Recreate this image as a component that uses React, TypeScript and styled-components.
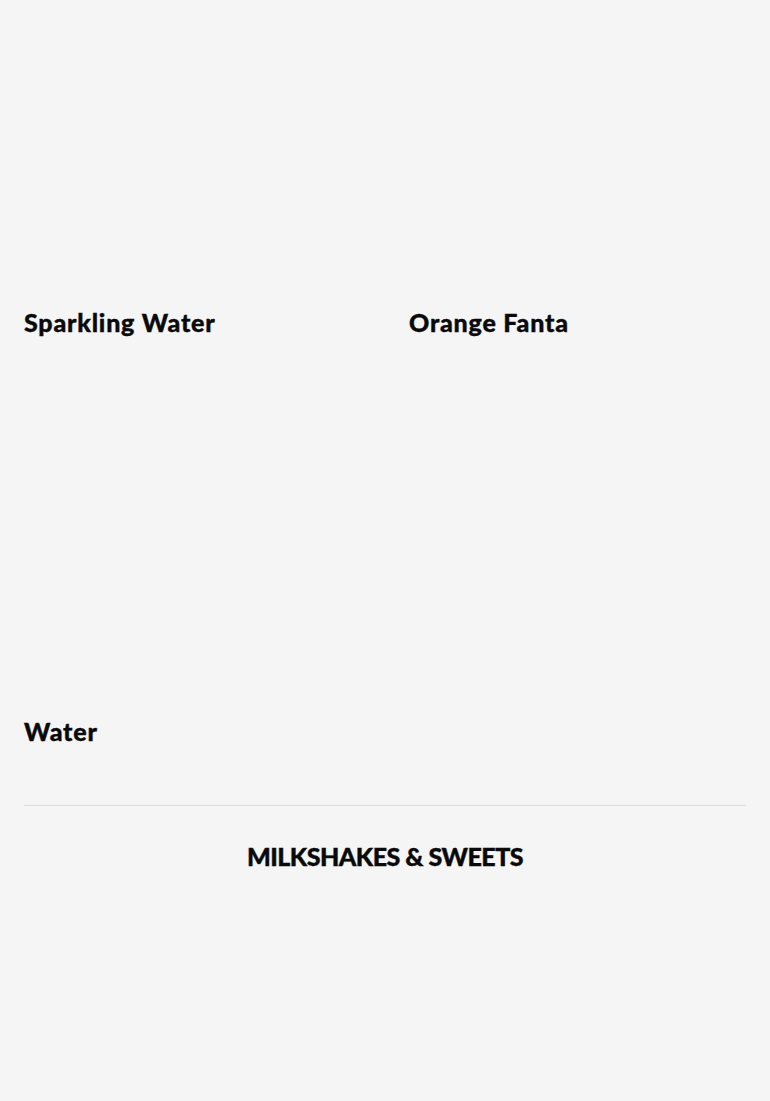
import React from 'react';
import styled, { createGlobalStyle } from 'styled-components';

const GlobalStyle = createGlobalStyle`
  html, body {
    margin: 0;
    padding: 0;
    background: #f5f5f5;
  }
  body {
    font-family: Lato, 'Noto Sans', sans-serif;
    color: #0a0a0a;
  }
`;

const Page = styled.main`
  padding: 0 24px;
  min-height: 1101px;
`;

const Grid = styled.div`
  display: grid;
  grid-template-columns: 1fr 1fr;
  column-gap: 48px;
  row-gap: 72px;
`;

const Item = styled.article`
  display: flex;
  flex-direction: column;
`;

// images don't load in the reference, so the slot stays empty
const Photo = styled.div`
  height: 296px;
`;

const Name = styled.h3`
  margin: 12px 0 0;
  font-size: 25px;
  line-height: 29px;
  font-weight: 900;
  letter-spacing: 0.8px;
  -webkit-text-stroke: 0.4px currentColor;
`;

const Divider = styled.hr`
  margin: 59px 0 0;
  border: 0;
  border-top: 1px solid #dcdcdc;
`;

const SectionTitle = styled.h2`
  margin: 34px 0 0;
  text-align: center;
  font-size: 25px;
  line-height: 32px;
  font-weight: 900;
  letter-spacing: -0.5px;
  text-transform: uppercase;
  -webkit-text-stroke: 0.4px currentColor;
`;

const drinks = ['Sparkling Water', 'Orange Fanta', 'Water'];

const App = () => {
  return (
    <>
      <GlobalStyle />
      <Page>
        <Grid>
          {drinks.map((name) => (
            <Item key={name}>
              <Photo />
              <Name>{name}</Name>
            </Item>
          ))}
        </Grid>
        <Divider />
        <SectionTitle>Milkshakes &amp; Sweets</SectionTitle>
      </Page>
    </>
  );
};

export default App;
